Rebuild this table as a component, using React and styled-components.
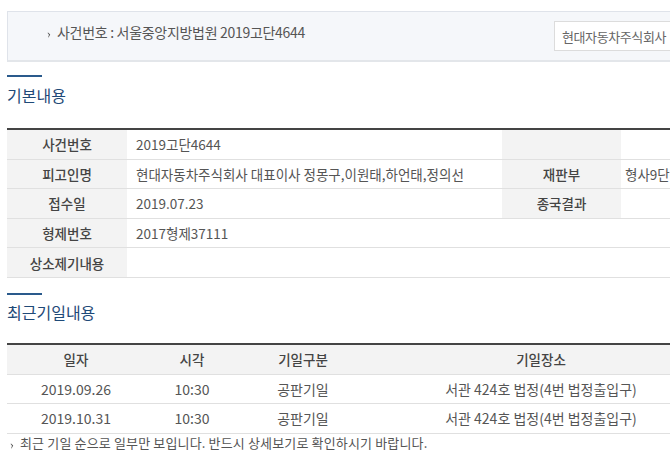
import React from "react";
import styled, { createGlobalStyle } from "styled-components";

const GlobalStyle = createGlobalStyle`
  body {
    margin: 0;
    overflow: hidden;
    background: #fff;
    font-family: "Noto Sans CJK KR", "Noto Sans", sans-serif;
    color: #555;
  }
`;

const basic = [
  { label: "사건번호", value: "2019고단4644", label2: "", value2: "" },
  {
    label: "피고인명",
    value: "현대자동차주식회사 대표이사 정몽구,이원태,하언태,정의선",
    label2: "재판부",
    value2: "형사9단독",
  },
  { label: "접수일", value: "2019.07.23", label2: "종국결과", value2: "" },
  { label: "형제번호", value: "2017형제37111" },
  { label: "상소제기내용", value: "" },
];

const dates = [
  { day: "2019.09.26", time: "10:30", kind: "공판기일", place: "서관 424호 법정(4번 법정출입구)" },
  { day: "2019.10.31", time: "10:30", kind: "공판기일", place: "서관 424호 법정(4번 법정출입구)" },
];

const Bullet = () => (
  <BulletMark width="4" height="6" viewBox="0 0 4 6">
    <path d="M1 0.5 L3.2 2.6 L1.6 5.5 L1.2 5.3 L2 2.7 L0.6 1.1 Z" fill="#555" />
  </BulletMark>
);

const App = () => {
  return (
    <>
      <GlobalStyle />
      <Page>
        <CaseBox>
          <CaseTitle>
            <Bullet />
            사건번호 : 서울중앙지방법원 2019고단4644
          </CaseTitle>
          <CaseInput defaultValue="현대자동차주식회사" />
        </CaseBox>

        <SectionTitle $top={13} $pad={7} $h={44}>
          기본내용
        </SectionTitle>
        <InfoTable>
          <tbody>
            {basic.map((row) => (
              <tr key={row.label}>
                <Th $w={120}>{row.label}</Th>
                {row.label2 === undefined ? (
                  <Td colSpan={3}>{row.value}</Td>
                ) : (
                  <>
                    <Td $w={375}>{row.value}</Td>
                    <Th $w={119}>{row.label2}</Th>
                    <Td $pad={4}>{row.value2}</Td>
                  </>
                )}
              </tr>
            ))}
          </tbody>
        </InfoTable>

        <SectionTitle $top={15} $pad={6} $h={42}>
          최근기일내용
        </SectionTitle>
        <DateTable>
          <thead>
            <tr>
              <HeadCell $w={138}>일자</HeadCell>
              <HeadCell $w={94}>시각</HeadCell>
              <HeadCell $w={128}>기일구분</HeadCell>
              <HeadCell>기일장소</HeadCell>
            </tr>
          </thead>
          <tbody>
            {dates.map((d) => (
              <tr key={d.day}>
                <Cell>{d.day}</Cell>
                <Cell>{d.time}</Cell>
                <Cell>{d.kind}</Cell>
                <Cell>{d.place}</Cell>
              </tr>
            ))}
          </tbody>
        </DateTable>
        <Note>
          <Bullet />
          최근 기일 순으로 일부만 보입니다. 반드시 상세보기로 확인하시기 바랍니다.
        </Note>
      </Page>
    </>
  );
};

const Page = styled.div`
  width: 708px;
  padding: 11px 0 0 7px;
`;

const CaseBox = styled.div`
  display: flex;
  align-items: center;
  height: 48px;
  background: #f5f7fa;
  border: 1px solid #dfe3ea;
  border-bottom: 2px solid #e3e6ea;
  padding-left: 39px;
`;

const CaseTitle = styled.div`
  display: flex;
  align-items: center;
  gap: 6px;
  font-size: 14px;
  color: #555;
  margin-top: -8px;
  letter-spacing: -0.3px;
`;

const BulletMark = styled.svg`
  flex: none;
  margin-top: 6px;
`;

const CaseInput = styled.input`
  width: 150px;
  height: 30px;
  margin-left: auto;
  margin-right: 10px;
  box-sizing: border-box;
  border: 1px solid #dcdcdc;
  background: #fff;
  padding: 0 7px;
  font-family: inherit;
  font-size: 13px;
  color: #666;
  letter-spacing: -0.4px;
  outline: none;
`;

const SectionTitle = styled.h3`
  margin: ${(p) => p.$top}px 0 0;
  padding-top: ${(p) => p.$pad}px;
  height: ${(p) => p.$h}px;
  border-top: 2px solid #2a5a8c;
  width: 35px;
  white-space: nowrap;
  font-size: 16px;
  font-weight: 400;
  color: #1f4a78;
  line-height: 22px;
`;

const InfoTable = styled.table`
  width: 708px;
  border-collapse: collapse;
  table-layout: fixed;
  border-top: 2px solid #444;
  font-size: 13.5px;
`;

const Th = styled.th`
  width: ${(p) => (p.$w ? `${p.$w}px` : "auto")};
  height: 28.6px;
  padding: 0;
  background: #f3f3f3;
  border-bottom: 1px solid #e0e0e0;
  font-weight: 500;
  color: #444;
  text-align: center;
`;

const Td = styled.td`
  box-sizing: border-box;
  width: ${(p) => (p.$w ? `${p.$w}px` : "auto")};
  height: 28.6px;
  padding: 0 0 0 ${(p) => p.$pad ?? 9}px;
  border-bottom: 1px solid #e0e0e0;
  color: #555;
  white-space: nowrap;
  overflow: hidden;
`;

const DateTable = styled.table`
  width: 708px;
  border-collapse: collapse;
  table-layout: fixed;
  border-top: 2px solid #444;
  font-size: 14px;
`;

const HeadCell = styled.th`
  width: ${(p) => (p.$w ? `${p.$w}px` : "auto")};
  height: 28.6px;
  padding: 0;
  background: #f3f3f3;
  border-bottom: 1px solid #e0e0e0;
  font-weight: 500;
  font-size: 13.5px;
  color: #444;
  text-align: center;
`;

const Cell = styled.td`
  height: 28.6px;
  padding: 0;
  border-bottom: 1px solid #e0e0e0;
  text-align: center;
  color: #555;
  white-space: nowrap;
`;

const Note = styled.p`
  display: flex;
  align-items: center;
  gap: 6px;
  margin: 0 0 0 3px;
  height: 18px;
  font-size: 13px;
  letter-spacing: 0.15px;
  color: #555;
`;

export default App;
